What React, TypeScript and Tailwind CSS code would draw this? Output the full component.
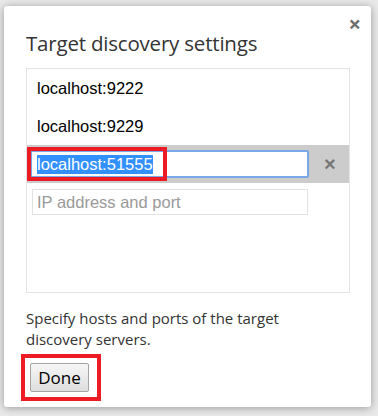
import React from "react";

const hosts = ["localhost:9222", "localhost:9229"];

const App: React.FC = () => {
  return (
    <div className="w-[378px] h-[416px] bg-[#e9e9e9] overflow-hidden pt-[6px] pl-[4px]">
      <div
        className="relative w-[367px] h-[401px] bg-white rounded-[3px] shadow-[0_1px_8px_rgba(0,0,0,0.35)] pl-[22px] pr-[21px]"
        style={{ fontFamily: "'Open Sans', 'Noto Sans', sans-serif" }}
      >
        {/* close */}
        <span className="absolute right-[10px] top-[6px] text-[#6f6f6f] text-[22px] font-bold leading-none">
          ×
        </span>

        <h1 className="pt-[24px] text-[20.5px] leading-[26px] text-[#333] tracking-[-0.2px]">
          Target discovery settings
        </h1>

        {/* host list */}
        <div
          className="mt-[12px] h-[225px] border border-[#e4e4e4] flex flex-col"
          style={{ fontFamily: "'Liberation Sans', Arial, sans-serif" }}
        >
          {hosts.map((h) => (
            <div key={h} className="h-[38px] flex items-center pl-[10px] text-[16.5px] text-black">
              {h}
            </div>
          ))}

          <div className="h-[38px] bg-[#cccccc] flex items-center">
            <div className="relative ml-[3px] w-[279px] h-[28px] bg-white border-2 border-[#7aa7e6] rounded-[2px] flex items-center pl-[5px]">
              <span className="text-[16.5px] text-white bg-[#3390ff] leading-[19px]">localhost:51555</span>
              <div className="absolute -left-[5px] -top-[5px] w-[140px] h-[34px] border-[4px] border-[#ed1c24]" />
            </div>
            <span className="ml-[15px] text-[#777] text-[20px] font-bold leading-none">×</span>
          </div>

          <div className="h-[38px] flex items-center">
            <div className="ml-[5px] w-[276px] h-[26px] border border-[#e2e2e2] flex items-center pl-[4px] text-[16.5px] text-[#9a9a9a]">
              IP address and port
            </div>
          </div>
        </div>

        <p className="mt-[15px] text-[15px] leading-[21px] text-[#333] w-[300px]">
          Specify hosts and ports of the target discovery servers.
        </p>

        {/* done */}
        <div className="mt-[4px] -ml-[5px] w-[80px] h-[47px] border-[4px] border-[#ed1c24] flex items-center pl-[5px]">
          <button
            className="w-[59px] h-[29px] border border-[#a4a4a4] rounded-[2px] bg-gradient-to-b from-[#f6f6f6] to-[#dedede] text-[17px] text-black leading-none"
            style={{ fontFamily: "'Open Sans', 'Noto Sans', sans-serif" }}
          >
            Done
          </button>
        </div>
      </div>
    </div>
  );
};

export default App;
